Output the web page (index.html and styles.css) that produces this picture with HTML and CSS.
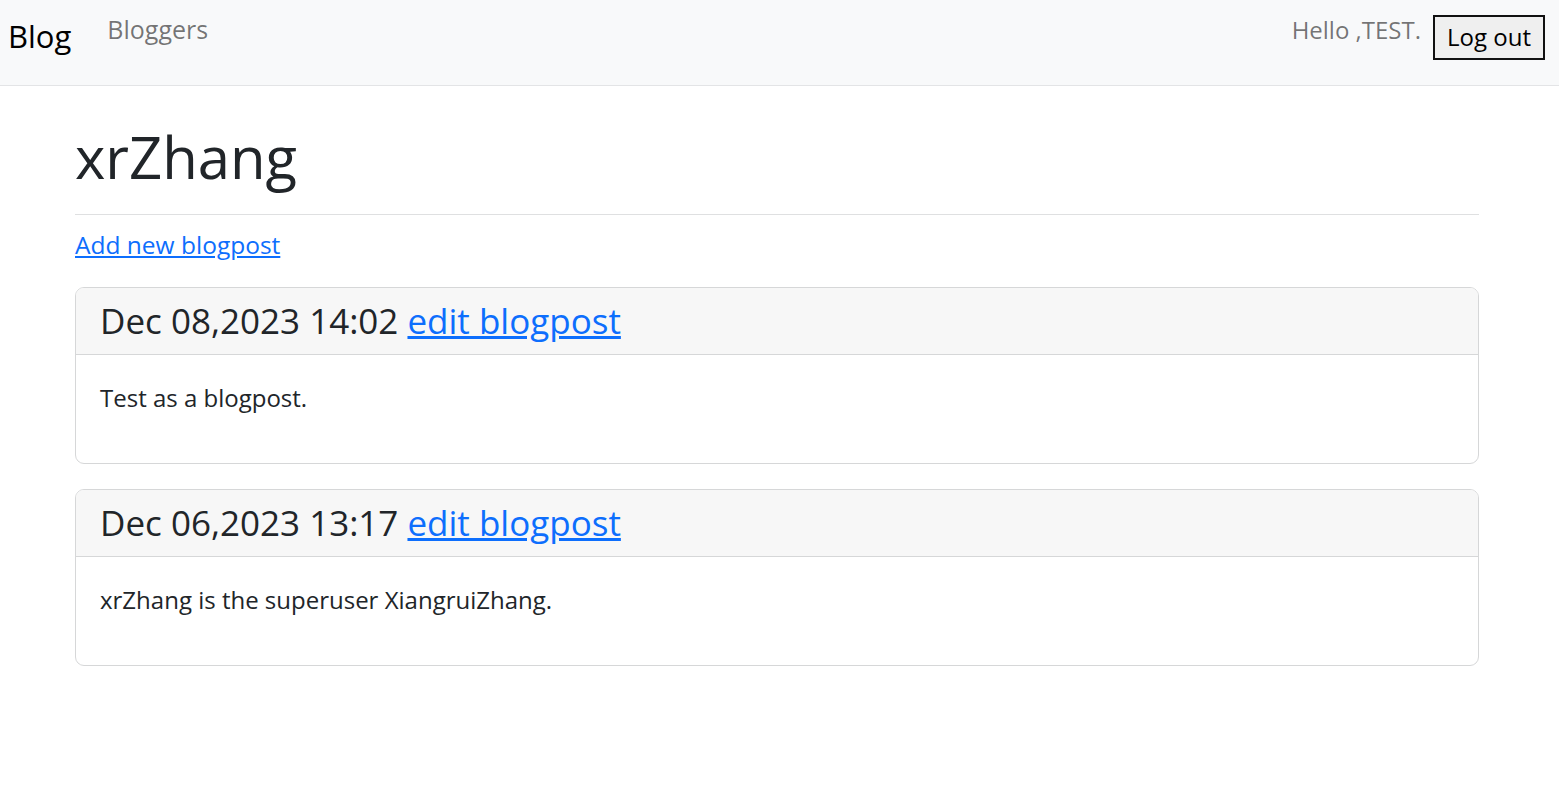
FILE: index.html
```html
<!DOCTYPE html>
<html lang="en">
<head>
<meta charset="utf-8">
<title>Blog</title>
<link rel="stylesheet" href="styles.css">
</head>
<body>
<nav class="navbar">
  <div class="nav-left">
    <a class="brand" href="#">Blog</a>
    <a class="nav-link" href="#">Bloggers</a>
  </div>
  <div class="nav-right">
    <span class="hello">Hello ,TEST.</span>
    <button class="logout" type="button">Log out</button>
  </div>
</nav>
<main class="container">
  <h1 class="title">xrZhang</h1>
  <hr class="rule">
  <a class="add-link" href="#">Add new blogpost</a>
  <div class="posts">
    <div class="card">
      <div class="card-header">
        <h4 class="card-title">Dec 08,2023 14:02 <a href="#" class="edit-link">edit blogpost</a></h4>
      </div>
      <div class="card-body">
        <p class="card-text">Test as a blogpost.</p>
      </div>
    </div>
    <div class="card">
      <div class="card-header">
        <h4 class="card-title">Dec 06,2023 13:17 <a href="#" class="edit-link">edit blogpost</a></h4>
      </div>
      <div class="card-body">
        <p class="card-text">xrZhang is the superuser XiangruiZhang.</p>
      </div>
    </div>
  </div>
</main>
</body>
</html>
```

FILE: styles.css
```css
* { box-sizing: border-box; }
html, body { margin: 0; padding: 0; }
body {
  font-family: "Open Sans", "Noto Sans", sans-serif;
  font-size: 24px;
  line-height: 1.5;
  color: #212529;
  background: #fff;
}
.navbar {
  display: flex;
  justify-content: space-between;
  align-items: flex-start;
  height: 86px;
  background: #f8f9fa;
  border-bottom: 1px solid #e3e4e6;
  padding: 0 14px 0 8px;
}
.nav-left { display: flex; align-items: flex-start; }
.brand {
  font-size: 31px;
  color: #000;
  text-decoration: none;
  line-height: 1.5;
  padding-top: 13px;
  margin-right: 36px;
}
.nav-link {
  font-size: 25px;
  color: rgba(0,0,0,.55);
  text-decoration: none;
  padding-top: 11px;
}
.nav-right { display: flex; align-items: flex-start; }
.hello {
  font-size: 24px;
  color: rgba(0,0,0,.55);
  padding-top: 12px;
  margin-right: 12px;
}
.logout {
  margin-top: 15px;
  font-family: inherit;
  font-size: 24px;
  line-height: 1.2;
  color: #000;
  background: #efefef;
  border: 2px solid #111;
  border-radius: 0;
  padding: 6px 12px 6px;
}
.container {
  width: 1404px;
  margin: 0 0 0 75px;
}
.title {
  font-size: 58px;
  font-weight: 400;
  line-height: 1.2;
  margin: 36px 0 22px;
}
.rule {
  border: 0;
  border-top: 1px solid #dfe0e1;
  margin: 0 0 12px;
}
.add-link {
  display: inline-block;
  font-size: 24.5px;
  color: #0d6efd;
  text-decoration: underline;
  margin-bottom: 24px;
}
.posts { display: flex; flex-direction: column; gap: 25px; }
.card {
  border: 1px solid #d6d7d8;
  border-radius: 9px;
  overflow: hidden;
}
.card-header {
  background: #f7f7f7;
  border-bottom: 1px solid #d6d7d8;
  padding: 12px 24px 12px;
}
.card-title {
  font-size: 35px;
  font-weight: 400;
  line-height: 1.2;
  margin: 0;
}
.edit-link { color: #0d6efd; text-decoration: underline; }
.card-body { padding: 25px 24px 23px; }
.card-text { margin: 0 0 24px; line-height: 1.5; }
```
